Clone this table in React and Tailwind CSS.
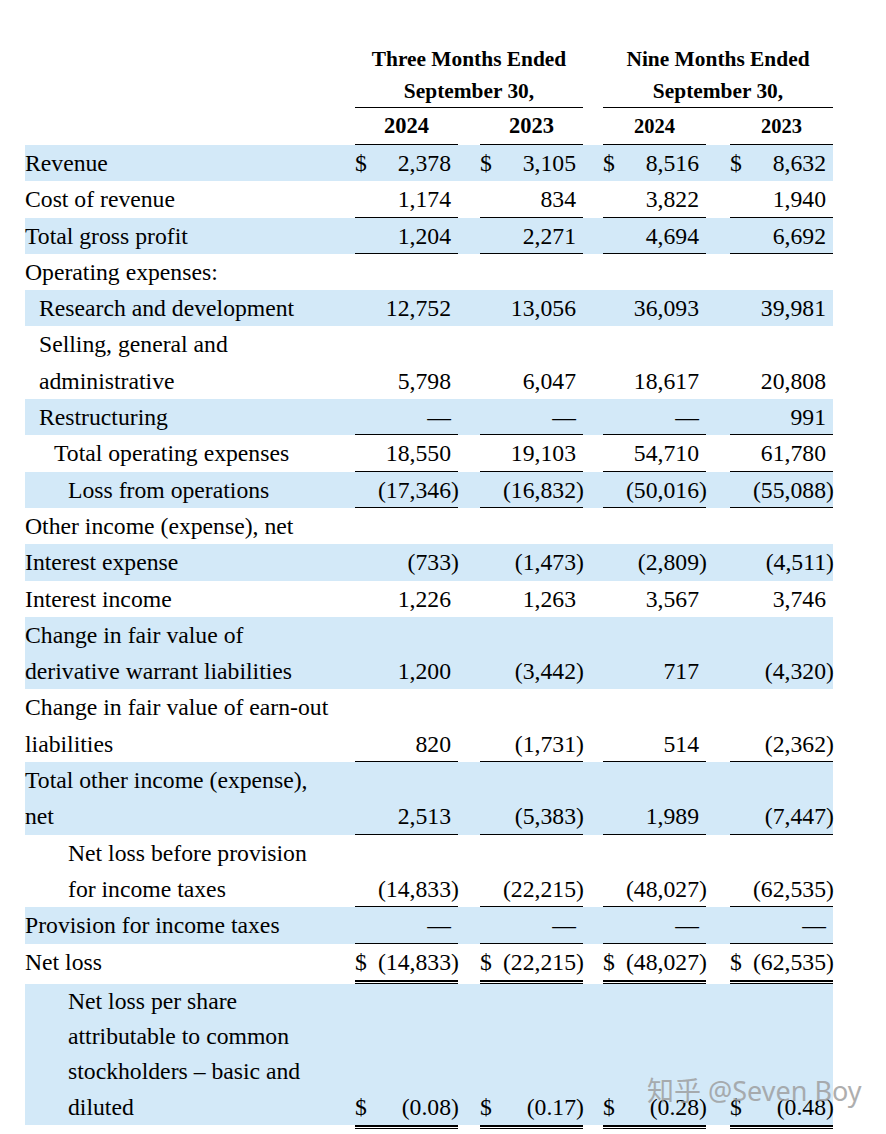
import React from 'react';

const BLUE = 'bg-[#d3e9f8]';

const rows = [
  { label: ['Revenue'], bg: true, dollar: true, vals: ['2,378', '3,105', '8,516', '8,632'] },
  { label: ['Cost of revenue'], vals: ['1,174', '834', '3,822', '1,940'], line: 'single' },
  { label: ['Total gross profit'], bg: true, vals: ['1,204', '2,271', '4,694', '6,692'], line: 'single' },
  { label: ['Operating expenses:'] },
  { label: ['Research and development'], indent: 1, bg: true, vals: ['12,752', '13,056', '36,093', '39,981'] },
  { label: ['Selling, general and', 'administrative'], indent: 1, vals: ['5,798', '6,047', '18,617', '20,808'] },
  { label: ['Restructuring'], indent: 1, bg: true, vals: ['—', '—', '—', '991'], line: 'single' },
  { label: ['Total operating expenses'], indent: 2, vals: ['18,550', '19,103', '54,710', '61,780'], line: 'single' },
  { label: ['Loss from operations'], indent: 3, bg: true, vals: ['(17,346)', '(16,832)', '(50,016)', '(55,088)'], line: 'single' },
  { label: ['Other income (expense), net'] },
  { label: ['Interest expense'], bg: true, vals: ['(733)', '(1,473)', '(2,809)', '(4,511)'] },
  { label: ['Interest income'], vals: ['1,226', '1,263', '3,567', '3,746'] },
  { label: ['Change in fair value of', 'derivative warrant liabilities'], bg: true, vals: ['1,200', '(3,442)', '717', '(4,320)'] },
  { label: ['Change in fair value of earn-out', 'liabilities'], vals: ['820', '(1,731)', '514', '(2,362)'], line: 'single' },
  { label: ['Total other income (expense),', 'net'], bg: true, vals: ['2,513', '(5,383)', '1,989', '(7,447)'], line: 'single' },
  { label: ['Net loss before provision', 'for income taxes'], indent: 3, vals: ['(14,833)', '(22,215)', '(48,027)', '(62,535)'], line: 'single' },
  { label: ['Provision for income taxes'], bg: true, vals: ['—', '—', '—', '—'], line: 'single' },
  { label: ['Net loss'], dollar: true, vals: ['(14,833)', '(22,215)', '(48,027)', '(62,535)'], line: 'double' },
  {
    label: ['Net loss per share', 'attributable to common', 'stockholders – basic and', 'diluted'],
    indent: 3,
    bg: true,
    dollar: true,
    tight: true,
    vals: ['(0.08)', '(0.17)', '(0.28)', '(0.48)'],
    line: 'double',
  },
];

const indents = ['pl-0', 'pl-[14px]', 'pl-[29px]', 'pl-[43px]'];
const colGap = ['ml-0', 'ml-[22px]', 'ml-[20px]', 'ml-[24px]'];

const ValueCell = ({ value, dollar, i, single, lead }) => {
  const neg = value.startsWith('(');
  const text = neg ? value.slice(0, -1) : value;
  return (
    <div
      className={`${colGap[i]} flex w-[103px] items-end ${lead} ${
        single ? 'shadow-[inset_0_-1px_0_#000]' : ''
      }`}
    >
      {dollar && <span>$</span>}
      <span className="ml-auto whitespace-nowrap">{text}</span>
      <span className="w-[7px]">{neg ? ')' : ''}</span>
    </div>
  );
};

const Row = ({ row }) => {
  const lead = row.tight ? 'leading-[35.3px]' : 'leading-[36.3px]';
  return (
    <>
      <div className={`flex items-stretch ${row.bg ? BLUE : ''}`}>
        <div className={`w-[330px] whitespace-nowrap ${lead} ${indents[row.indent || 0]}`}>
          {row.label.map((l, k) => (
            <div key={k}>{l}</div>
          ))}
        </div>
        {row.vals &&
          row.vals.map((v, i) => (
            <ValueCell
              key={i}
              i={i}
              value={v}
              dollar={row.dollar}
              single={row.line === 'single'}
              lead={lead}
            />
          ))}
      </div>
      {row.line === 'double' && (
        <div className="flex h-[4px]">
          <div className="w-[330px]" />
          {[0, 1, 2, 3].map((i) => (
            <div key={i} className={`${colGap[i]} w-[103px] border-t-2 border-b border-black`} />
          ))}
        </div>
      )}
    </>
  );
};

export default function App() {
  return (
    <div className="relative h-[1134px] w-[886px] overflow-hidden bg-white font-['Liberation_Serif',serif] text-black">
      <div className="ml-[25px] w-[808px] pt-[43px]">
        {/* column headings */}
        <div className="flex font-bold">
          <div className="w-[330px]" />
          <div className="w-[228px] border-b border-black text-center text-[21.4px] leading-[32px]">
            Three Months Ended
            <br />
            September 30,
          </div>
          <div className="ml-[20px] w-[230px] border-b border-black text-center text-[21.4px] leading-[32px]">
            Nine Months Ended
            <br />
            September 30,
          </div>
        </div>
        <div className="flex font-bold leading-[36px]">
          <div className="w-[330px]" />
          <div className="w-[103px] border-b border-black text-center text-[22.5px]">2024</div>
          <div className="ml-[22px] w-[103px] border-b border-black text-center text-[22.5px]">2023</div>
          <div className="ml-[20px] w-[103px] border-b border-black text-center text-[20.5px]">2024</div>
          <div className="ml-[24px] w-[103px] border-b border-black text-center text-[20.5px]">2023</div>
        </div>

        <div className="text-[23.7px]">
          {rows.map((row, k) => (
            <Row key={k} row={row} />
          ))}
        </div>
      </div>

      {/* watermark */}
      <div className="absolute left-[647px] top-[1077px] whitespace-nowrap font-['Noto_Sans','Noto_Sans_CJK_SC',sans-serif] text-[27px] leading-none text-[#9b9b9b] opacity-80">
        知乎 @Seven Boy
      </div>
    </div>
  );
}
